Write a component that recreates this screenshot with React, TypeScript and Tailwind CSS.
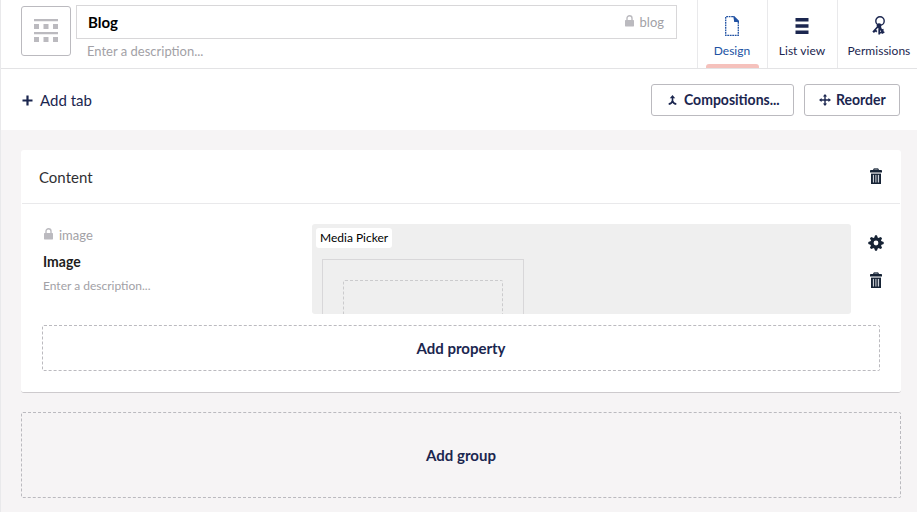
import React from "react";

function Lock({ className }: { className?: string }) {
  return (
    <svg className={className} width="9" height="12" viewBox="0 0 9 12">
      <path d="M2 5.5V3.2a2.5 2.5 0 0 1 5 0v2.3" fill="none" stroke="currentColor" strokeWidth="1.4" />
      <rect x="0" y="5" width="9" height="6.4" rx="0.6" fill="currentColor" />
    </svg>
  );
}

function Trash() {
  return (
    <svg width="12" height="16" viewBox="0 0 12 16">
      <path d="M3.8 2V.9h4.4V2" fill="#9aa0ac" stroke="#162335" strokeWidth="1" />
      <rect x="0" y="2" width="12" height="2.6" rx=".4" fill="#162335" />
      <path d="M1 5.6h10V16H1z" fill="#162335" />
      <path d="M3.4 6.9v7.6M8.6 6.9v7.6" stroke="#dfe3e8" strokeWidth="1" />
      <path d="M5.5 6.9v7.6M6.8 6.9v7.6" stroke="#a9adb6" strokeWidth=".8" />
    </svg>
  );
}

function Gear() {
  return (
    <svg width="16" height="16" viewBox="-8 -8 16 16" fill="#162335">
      {[0, 45, 90, 135].map((a) => (
        <path key={a} d="M-1.9-5 -.9-7.7H.9L1.9-5V5L.9 7.7H-.9L-1.9 5z" transform={`rotate(${a})`} />
      ))}
      <circle r="5.5" />
      <circle r="2.4" fill="#fff" />
    </svg>
  );
}

function DocTypeIcon() {
  return (
    <svg width="24" height="24" viewBox="0 0 24 24" fill="#bbbabf">
      <path d="M0 0h24v2.3H0zM0 13h24v2.3H0zM0 5h5v5H0zM9.5 5h5v5h-5zM19 5h5v5h-5zM0 18h5v5H0zM9.5 18h5v5h-5zM19 18h5v5h-5z" />
    </svg>
  );
}

function DesignIcon() {
  return (
    <svg width="14" height="20" viewBox="0 0 14 20">
      <path d="M8 .7H.7v18.6h12.6V6" fill="none" stroke="#2152a3" strokeWidth="1.3" strokeDasharray="1.8 .7" />
      <path d="M8 0h1.2L14 4.8V6H9.2Q8.8 2.4 8 0z" fill="#2152a3" />
    </svg>
  );
}

function ListIcon() {
  return (
    <svg width="14" height="16" viewBox="0 0 14 16" fill="#1b264f">
      <path d="M.5 0h13v3.6H.5zM.5 6.2h13v3.6H.5zM.5 12.4h13V16H.5z" />
    </svg>
  );
}

function KeysIcon() {
  return (
    <svg width="14" height="20" viewBox="0 0 14 20" fill="none" stroke="#1b264f">
      <circle cx="8" cy="5" r="4.2" strokeWidth="1.4" />
      <circle cx="7" cy="9.7" r="2.4" fill="#1b264f" stroke="none" />
      <path d="M6 10.5 1 16M2.8 14l2 1.7M1.2 15l1.4 1.4" strokeWidth="1.8" />
      <path d="M7.2 10v8.5M7.8 10l3 7.6M7 13.6h2M7 16.6h2.5M9.6 14.4l2-.8M10.5 16.6l1.8-.7" strokeWidth="1.7" />
    </svg>
  );
}

function MergeIcon() {
  return (
    <svg width="9" height="10" viewBox="0 0 9 10">
      <path d="M4.5 2v3.6C4.3 7.4 3 8.7.7 9.1M4.5 5.6C4.7 7.4 6 8.7 8.3 9.1" fill="none" stroke="#1b264f" strokeWidth="1.6" />
      <path d="M4.5 0 7.2 3.2H1.8z" fill="#1b264f" />
    </svg>
  );
}

function MoveIcon() {
  return (
    <svg width="12" height="12" viewBox="0 0 12 12" fill="#1b264f">
      <path d="M6 0l2.1 2.6H3.9zM6 12l2.1-2.6H3.9zM0 6l2.6-2.1v4.2zM12 6 9.4 3.9v4.2z" />
      <path d="M5.3 2h1.4v8H5.3zM2 5.3h8v1.4H2z" />
    </svg>
  );
}

function NavTab({ icon, label, active }: { icon: React.ReactNode; label: string; active?: boolean }) {
  return (
    <div
      className={`flex h-[68px] shrink-0 flex-col items-center border-l border-[#e9e9eb] text-[12px] leading-[16px] ${
        active ? "text-[#2152a3]" : ""
      } ${label === "Permissions" ? "w-[84px]" : "w-[70px]"}`}
    >
      <div className="mr-px mt-4 flex h-5 items-center">{icon}</div>
      <span className="mr-px mt-[7px] whitespace-nowrap tracking-[0.04px]">{label}</span>
      {active && <div className="mt-auto h-1 w-[53px] rounded-t-[3px] bg-[#f5c1bc]" />}
    </div>
  );
}

export default function App() {
  return (
    <div className="flex h-[512px] w-[917px] flex-col overflow-hidden border-l border-[#e9e9eb] bg-[#f6f4f5] font-['Lato',sans-serif] text-[15px] text-[#1b264f]">
      <header className="flex h-[69px] shrink-0 border-b border-[#e3e3e5] bg-white">
        <div className="ml-5 mt-1.5 flex h-[50px] w-[50px] shrink-0 items-center justify-center rounded-[3px] border border-[#bbbabf]">
          <DocTypeIcon />
        </div>
        <div className="ml-[5px] mt-[5px] w-[601px] shrink-0">
          <div className="flex h-[34px] items-center border border-[#d8d7d9] pl-[11px] pr-3">
            <span className="font-bold text-black">Blog</span>
            <Lock className="mb-[3px] ml-auto text-[#bbbabf]" />
            <span className="ml-1.5 origin-bottom scale-y-[1.07] pt-0.5 text-[13px] text-[#a2a1a6]">blog</span>
          </div>
          <div className="ml-[11px] mt-[3px] scale-y-[1.07] text-[13px] leading-[18px] text-[#a2a1a6]">Enter a description...</div>
        </div>
        <nav className="ml-5 flex">
          <NavTab icon={<DesignIcon />} label="Design" active />
          <NavTab icon={<ListIcon />} label="List view" />
          <NavTab icon={<KeysIcon />} label="Permissions" />
        </nav>
      </header>

      <div className="flex h-[61px] shrink-0 items-center bg-white pl-[21px] pr-[17px]">
        <svg className="mt-px" width="11" height="11" viewBox="0 0 11 11" fill="#1b264f">
          <path d="M4.4.5h2.2v10H4.4zM.5 4.4h10v2.2H.5z" />
        </svg>
        <span className="ml-[7px] pt-0.5">Add tab</span>
        <button className="ml-auto flex h-8 w-[143px] items-center rounded-[3px] border border-[#bbbabf] pl-4 text-[14px] font-bold">
          <MergeIcon />
          <span className="ml-[7px] scale-y-[1.07]">Compositions...</span>
        </button>
        <button className="ml-2.5 flex h-8 w-24 items-center rounded-[3px] border border-[#bbbabf] pl-3.5 text-[14px] font-bold">
          <MoveIcon />
          <span className="ml-[5px] scale-y-[1.07]">Reorder</span>
        </button>
      </div>

      <main className="flex flex-col pl-5 pr-4 pt-5">
        <section className="h-[243px] rounded-[3px] border-b border-[#cdcacd] bg-white">
          <div className="mx-px flex h-[54px] items-center justify-between border-b border-[#e9e9eb] pl-[17px] pr-[18px] text-[#303033]">
            <span className="pt-0.5">Content</span>
            <div className="pb-0.5">
              <Trash />
            </div>
          </div>
          <div className="flex h-[121px] pl-[22px] pt-5">
            <div className="w-[269px] shrink-0">
              <div className="flex h-[23px] items-center text-[13px] text-[#a2a1a6]">
                <Lock className="mb-[3px] ml-px text-[#bbbabf]" />
                <span className="ml-1.5 scale-y-[1.07]">image</span>
              </div>
              <div className="mt-[5px] scale-y-[1.07] text-[14px] font-bold leading-5 text-[#1d1d20]">Image</div>
              <div className="mt-[6px] text-[12px] leading-4 text-[#a2a1a6]">Enter a description...</div>
            </div>
            <div className="h-[90px] w-[539px] overflow-hidden rounded-[3px] bg-[#efefef] pl-1 pt-1">
              <div className="h-5 w-[76px] whitespace-nowrap rounded-[3px] bg-white pl-1 text-[12px] leading-5 text-black">Media Picker</div>
              <div className="ml-1.5 mt-[11px] h-[100px] w-[202px] border border-[#d8d7d9] px-5 pt-5">
                <div className="h-20 rounded-[2px] border border-dashed border-[#cbcbcd]" />
              </div>
            </div>
            <div className="ml-[17px] flex flex-col items-center gap-[21px] pt-[11px]">
              <Gear />
              <Trash />
            </div>
          </div>
          <button className="ml-[21px] block h-[46px] w-[838px] rounded-[2px] border border-dashed border-[#bbbabf] font-bold">
            Add property
          </button>
        </section>
        <button className="mt-[19px] h-[86px] rounded-[2px] border border-dashed border-[#bbbabf] font-bold">Add group</button>
      </main>
    </div>
  );
}
